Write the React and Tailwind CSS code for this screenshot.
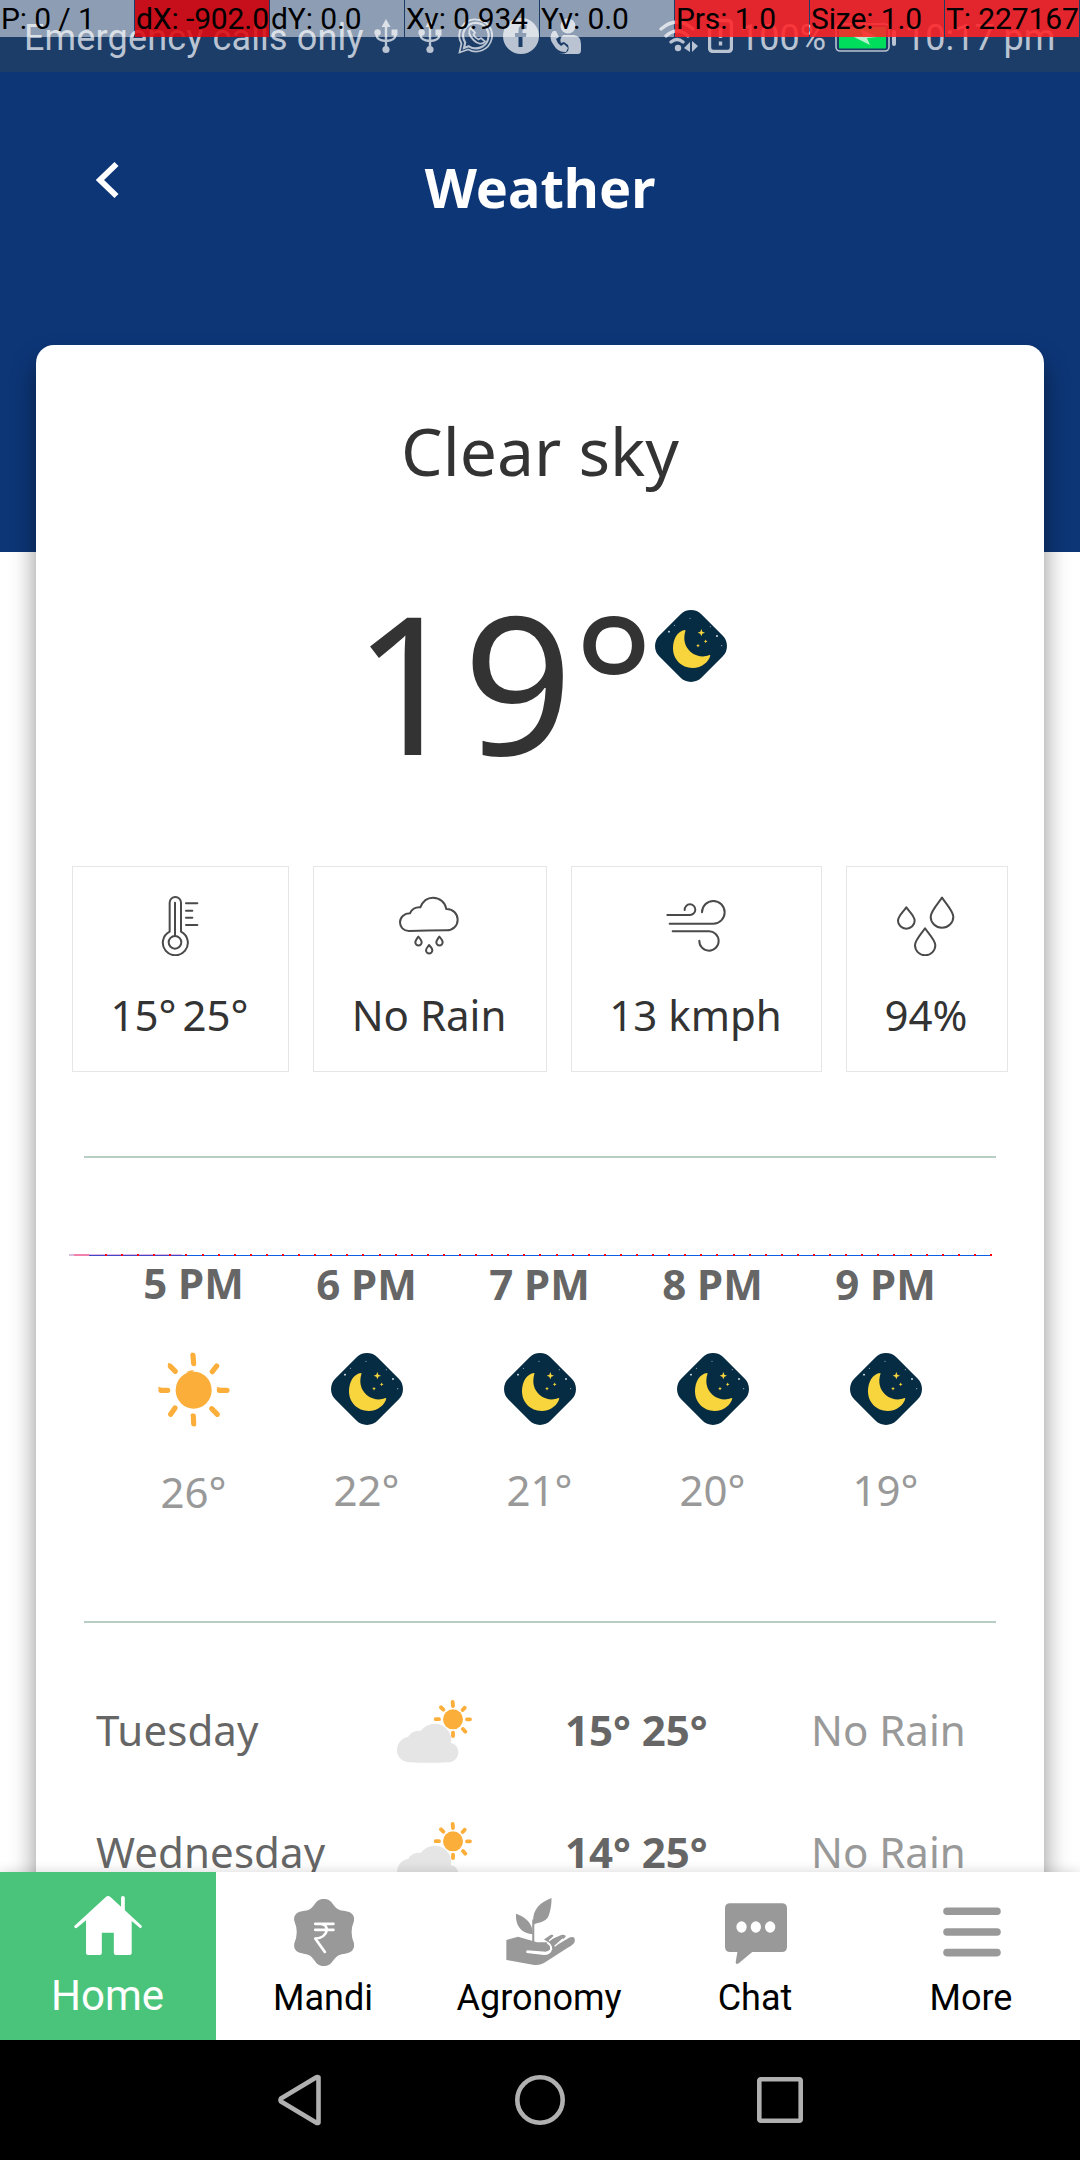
import React from "react";

const METRICS = [
  ["P: 0 / 1", "bg-white/50"],
  ["dX: -902.0", "bg-[#de090f]/88"],
  ["dY: 0.0", "bg-white/50"],
  ["Xv: 0.934", "bg-white/50"],
  ["Yv: 0.0", "bg-white/50"],
  ["Prs: 1.0", "bg-[#ff2325]/88"],
  ["Size: 1.0", "bg-[#ff2325]/88"],
  ["T: 227167", "bg-[#ff2325]/88"],
];

function PointerBar() {
  return (
    <div className="absolute left-0 top-0 z-20 grid h-[37px] w-full grid-cols-8">
      {METRICS.map(([label, bg]) => (
        <div key={label} className={`mr-px whitespace-nowrap pl-px pt-px text-[30px] leading-[36px] tracking-[-0.12px] text-black ${bg}`}>
          {label}
        </div>
      ))}
    </div>
  );
}

function Usb() {
  return (
    <svg className="h-9 w-6 shrink-0" viewBox="0 0 24 36" fill="none" stroke="currentColor" strokeWidth="2.4">
      <path d="M12 30V5M2.8 14v4q0 4 9 5M21.2 14v4q0 4-9 5" />
      <path d="M12 1l4.5 8h-9z" fill="currentColor" stroke="none" />
      <circle cx="12" cy="31.5" r="3.6" fill="currentColor" stroke="none" />
      <circle cx="3.6" cy="14.5" r="3.2" fill="currentColor" stroke="none" />
      <path d="M17.5 11.5h6v6h-6z" fill="currentColor" stroke="none" />
    </svg>
  );
}

function StatusBar() {
  return (
    <div className="flex h-[72px] w-full shrink-0 items-start bg-[#1b3d68] pl-6 pt-4 text-[36px] leading-[44px] whitespace-nowrap text-[#b9c3d1]">
      <span className="w-[350px] tracking-[0.15px]">Emergency calls only</span>
      <div className="mt-[2px] flex w-[284px] items-start">
        <Usb />
        <span className="w-5" />
        <Usb />
        <svg className="ml-4 h-9 w-9" viewBox="0 0 36 36" fill="none" stroke="currentColor">
          <path d="M18.3 1.5a16 16 0 1 1-8 30L1.5 34.5l2-9A16 16 0 0 1 18.3 1.5z" strokeWidth="1.8" />
          <path d="M18.3 4.8a12.8 12.8 0 1 1-7.5 23.5L6 30l1.2-5.5A12.8 12.8 0 0 1 18.3 4.8z" strokeWidth="2.2" />
          <path d="M12.5 10c-3 4-1 8 3 12s9 5 11.5 1.5l-4-3.5-2.5 1.5q-3.5-1.5-5-5l1.5-2z" strokeWidth="1.8" />
        </svg>
        <svg className="ml-[9px] h-9 w-9" viewBox="0 0 36 36">
          <path fillRule="evenodd" fill="currentColor" d="M18 0a18 18 0 1 0 0 36 18 18 0 1 0 0-36zM15.500 29V19h-3.500v-4h3.500v-3q0-5 5-5h3v4h-2q-2 0-2 2v2h4l-.6 4h-3.400v10z" />
        </svg>
        <svg className="ml-[11px] h-9 w-8" viewBox="0 0 32 36" fill="currentColor">
          <circle cx="18" cy="8" r="7.500" />
          <path d="M13 17h11q7 1 7 9v6q0 4-3 4H9q12 0 9-9l-4-3-3 1q-2-4 2-8z" />
          <path d="M3 13q-5 6 0 13 5 9 13 8l2-4-4-4-3 2q-4-3-5-7l3-2-3-6z" />
        </svg>
      </div>
      <svg className="mt-[3px] h-9 w-[42px]" viewBox="0 0 42 36" fill="none" stroke="currentColor" strokeWidth="3.300" strokeLinecap="round">
        <path d="M3 10Q19-4 35 10M8 17q11-10 22 0M13 23q6-5 12 0" />
        <circle cx="20" cy="29" r="3.200" fill="currentColor" stroke="none" />
        <path d="M32 23v10l-6-4zM34 22l6 5-6 6z" fill="currentColor" stroke="none" />
      </svg>
      <svg className="ml-[8px] mt-[2px] h-[35px] w-[25px]" viewBox="0 0 25 35" fill="none" stroke="currentColor" strokeWidth="3.400">
        <path d="M8.500 2.500h11q4 0 4 4v23q0 4-4 4h-14q-4 0-4-4V10z" />
        <path d="M12.500 10v10M12.500 23.500v4" />
      </svg>
      <span className="ml-[6px] w-[96px]">100%</span>
      <svg className="mt-[7px] h-[30px] w-[62px]" viewBox="0 0 62 30">
        <rect x="1" y="1" width="53" height="27" rx="4" fill="none" stroke="#b9c3d1" strokeWidth="1.600" />
        <rect x="4" y="4" width="47" height="21.500" rx="1" fill="#00dc5c" />
        <rect x="57" y="7" width="4" height="16" rx="2" fill="#b9c3d1" />
        <path d="M42 14l-16-8 2 7H17L35 22l-3-7z" fill="#b5f0cc" />
      </svg>
      <span className="ml-[8px]">10:17 pm</span>
    </div>
  );
}

function MoonIcon() {
  return (
    <svg className="h-[72px] w-[72px] shrink-0" viewBox="945 630 216 216">
      <rect x="963.500" y="648.500" width="179" height="179" rx="45" transform="rotate(45 1053 738)" fill="#062c43" />
      <path d="M1036 690C1012 692 999 718 999 745C999 778 1024 804 1058 804C1085 804 1107 786 1111 766Q1109 764 1106 766C1092 772 1068 770 1052 756C1034 740 1029 718 1036 694Q1037 691 1036 690Z" fill="#f8d53c" />
      <path d="M1084 687l3 8 8 3-8 3-3 8-3-8-8-3 8-3zM1097 718.500l1.700 3.800 3.800 1.700-3.800 1.700-1.700 3.800-1.700-3.800-3.800-1.700 3.800-1.700zM1074 731.500l1.700 3.800 3.800 1.700-3.800 1.700-1.700 3.800-1.700-3.800-3.800-1.700 3.800-1.700z" fill="#f8d53c" />
      <g fill="#dfe6ea">
        <circle cx="987" cy="695" r="2.800" />
        <circle cx="1131" cy="708" r="2.800" />
        <g opacity=".7">
          <circle cx="1003.500" cy="676" r="1.800" />
          <circle cx="1050" cy="655" r="1.700" />
          <circle cx="1111" cy="680" r="1.700" />
          <circle cx="1145" cy="737" r="1.800" />
        </g>
      </g>
    </svg>
  );
}

function SunIcon() {
  return (
    <svg className="h-[77px] w-[77px] shrink-0" viewBox="344 633 231 231" fill="#fcae3b">
      <ellipse cx="460" cy="750.500" rx="54" ry="55.500" />
      <path d="M437 699q8-9 24-8l-3 4z" />
      <g stroke="#fcae3b" strokeWidth="15.500" strokeLinecap="round">
        <path d="M458 646l2 25M459 828l1 24M362 751h20M537 751h23M390 679l15 15M529 678l-13 17M404 804l-13 19M514 806l17 17" />
      </g>
      <path d="M450 645l5-9 3 6zM382 676l2-8 8 5zM353 746l2-6 9 4zM529 746l2-6 9 4zM450 827l5-8 4 6z" />
    </svg>
  );
}

function PartlyCloudyIcon() {
  return (
    <svg className="ml-px mt-[2px] h-[63px] w-[75px] shrink-0" viewBox="1068 300 225 189">
      <circle cx="1236" cy="358" r="30" fill="#fcae3b" />
      <path d="M1235 306l1 12M1236 398v10M1184 357.500h10M1278 358h9M1200 322l7 7M1271 323l-6 7M1266 387l7 8" stroke="#fcae3b" strokeWidth="11.500" strokeLinecap="round" />
      <path d="M1106 487C1084 487 1068 471 1068 451C1068 431 1082 413 1101 411C1110 396 1125 390 1139 393C1151 378 1166 371 1182 371C1209 371 1230 393 1231 419L1229 429C1242 430 1252 442 1252 456C1252 474 1238 487 1221 487Q1165 490 1106 487Z" fill="#e5e5e5" />
    </svg>
  );
}

const line = { fill: "none", stroke: "#4a4a4a", strokeWidth: 6, strokeLinecap: "round", strokeLinejoin: "round" };

function TileIcon({ box, children }) {
  return (
    <svg className="h-[60px] w-[60px]" viewBox={box} {...line}>
      {children}
    </svg>
  );
}

const TILES = [
  {
    w: "w-[217px]",
    text: ["15°", "25°"],
    icon: (
      <TileIcon box="330 138 180 180">
        <path d="M389 245V158a17 17 0 0 1 34 0v87a37.500 37.500 0 1 1-34 0zM405 158v99" />
        <circle cx="405" cy="277" r="19" />
        <path d="M438 160h34M438 182h19M438 203h19M438 225h34" />
      </TileIcon>
    ),
  },
  {
    w: "w-[234px]",
    text: ["No Rain"],
    icon: (
      <TileIcon box="1080 138 180 180">
        <path d="M1110 243C1093 243 1083 231 1083 217C1083 202 1095 190 1113 190Q1121 171 1144 172C1151 154 1165 143 1182 143C1203 143 1219 158 1222 177C1243 176 1256 193 1256 209C1256 227 1242 241 1223 241Q1165 241 1110 243Z" />
        <path d="M1138 260q-9 12-9 17a9.500 9.500 0 0 0 19 0q0-6-10-17zM1201 260q-9 12-9 17a9.500 9.500 0 0 0 19 0q0-6-10-17zM1170 285q-9 12-9 16a9.500 9.500 0 0 0 19 0q0-6-10-16z" />
      </TileIcon>
    ),
  },
  {
    w: "w-[251px]",
    text: ["13 kmph"],
    icon: (
      <TileIcon box="379 138 180 180">
        <path d="M383 195h67a16 16 0 1 0-15-15M390 221h131a34 34 0 1 0-34-34M399 244h108a29 29 0 1 1-28 28" />
      </TileIcon>
    ),
  },
  {
    w: "w-[162px]",
    text: ["94%"],
    icon: (
      <TileIcon box="1071 138 180 180">
        <path d="M1209 143C1199 158 1175 184 1175 200a34 33 0 0 0 68 0C1243 184 1219 158 1209 143zM1102 172C1094 184 1077 198 1077 212a25 24 0 0 0 50 0C1127 198 1110 184 1102 172zM1158 235C1150 248 1128 270 1128 286a30.500 30 0 0 0 61 0C1189 270 1166 248 1158 235z" />
      </TileIcon>
    ),
  },
];

const HOURS = [
  ["5 PM", "26°", true],
  ["6 PM", "22°"],
  ["7 PM", "21°"],
  ["8 PM", "20°"],
  ["9 PM", "19°"],
];

const DAYS = [
  ["Tuesday", "15° 25°"],
  ["Wednesday", "14° 25°"],
];

function ChartLine() {
  return (
    <svg className="ml-[33px] mt-24 block h-[2px] w-[923px]" viewBox="0 0 923 2" shapeRendering="crispEdges">
      <rect width="5" height="2" fill="#d9bcdd" />
      <rect x="5" width="15" height="2" fill="#f281ab" />
      <rect x="20" width="93" height="1" fill="#dcb8e2" />
      <rect x="20" y="1" width="903" height="1" fill="#0f5fe6" />
      <rect x="20" y="1" width="93" height="1" fill="#3f46c8" />
      {Array.from({ length: 56 }, (_, i) => (
        <rect key={i} x={Math.round(36 + i * 16.09)} width="2" height="2" fill="#fb0410" />
      ))}
    </svg>
  );
}

function WeatherCard() {
  return (
    <section className="relative mx-9 -mt-[207px] h-[1700px] rounded-[18px] bg-white pt-[60px] font-['Noto_Sans','Open_Sans',sans-serif] text-[42px] leading-[58px] shadow-[0_16px_26px_rgba(0,0,0,0.44)]">
      <h2 className="text-center text-[66px] leading-[90px] text-[#333]">Clear sky</h2>
      <div className="mt-14 flex h-[260px] items-start justify-center text-[#333]">
        <span className="text-[192px] leading-[260px]">19°</span>
        <div className="mt-[59px]">
          <MoonIcon />
        </div>
      </div>
      <div className="mt-[55px] flex gap-6 px-9 text-[#333]">
        {TILES.map((t) => (
          <div key={t.w} className={`flex h-[206px] flex-col items-center border border-[#e6e6e6] pr-[2px] pt-[29px] ${t.w}`}>
            {t.icon}
            <div className="mt-[30px] flex gap-[6px] whitespace-nowrap">
              {t.text.map((s) => (
                <span key={s}>{s}</span>
              ))}
            </div>
          </div>
        ))}
      </div>
      <div className="mx-12 mt-[84px] h-[2px] bg-[#b7cfc2]" />
      <ChartLine />
      <div className="-mt-px ml-[71px] flex h-[366px]">
        {HOURS.map(([hour, temp, day]) => (
          <div key={hour} className={`flex w-[173px] flex-col items-center ${day ? "-mt-px" : ""}`}>
            <span className="font-bold text-[#666]">{hour}</span>
            <div className={day ? "mb-[35px] mt-[39px]" : "mb-9 mt-10"}>{day ? <SunIcon /> : <MoonIcon />}</div>
            <span className="text-[#999]">{temp}</span>
          </div>
        ))}
      </div>
      <div className="mx-12 h-[2px] bg-[#b7cfc2]" />
      <div className="mt-[46px] flex flex-col px-[60px]">
        {DAYS.map(([day, temp]) => (
          <div key={day} className="flex h-[122px] items-center whitespace-nowrap">
            <span className="w-[300px] tracking-[0.1px] text-[#666]">{day}</span>
            <PartlyCloudyIcon />
            <span className="ml-[93px] w-[246px] font-bold text-[#666]">{temp}</span>
            <span className="text-[#999]">No Rain</span>
          </div>
        ))}
      </div>
    </section>
  );
}

const NAV = [
  {
    label: "Mandi",
    icon: (
      <svg className="mt-[27px] h-[67px] w-[60px]" viewBox="853 118 175 200" preserveAspectRatio="none">
        <path d="M940 118C972 118 962 150 998 153C1024 156 1030 168 1028 184Q1014 218 1028 250C1030 268 1022 278 998 282C962 286 972 318 940 318C908 318 918 286 884 282C858 278 851 268 854 250Q868 218 854 184C851 168 858 156 884 153C918 150 908 118 940 118Z" fill="#999" />
        <path d="M915 192h53M915 210h53M930 192C958 192 955 234 915 236L943 276" fill="none" stroke="#fff" strokeWidth="8" strokeLinecap="round" strokeLinejoin="round" />
      </svg>
    ),
  },
  {
    label: "Agronomy",
    icon: (
      <svg className="mt-[26px] h-[67px] w-[69px]" viewBox="1470 116 200 200" preserveAspectRatio="none" fill="#999">
        <path d="M1602 116C1570 128 1546 150 1549 188V196C1560 188 1586 190 1594 168C1600 150 1602 134 1602 116Z" />
        <path d="M1499 163C1524 172 1548 190 1548 224C1520 222 1497 206 1499 163Z" />
        <path d="M1546 180h6v67h-6z" />
        <path d="M1471 241L1505 232L1560 248L1590 248Q1602 258 1598 270Q1592 278 1578 276L1530 272V280L1580 286Q1600 286 1604 268Q1604 254 1590 246L1580 240L1600 226Q1608 224 1607 230L1600 240L1632 226Q1644 224 1643 232L1618 256L1654 234Q1672 228 1669 246Q1668 254 1650 264L1580 310Q1566 318 1548 315L1471 301Z" />
        <path d="M1530 277l50 5q20-1 20-16 0-10-10-16" fill="none" stroke="#fff" strokeWidth="4" strokeLinecap="round" />
        <path d="M1596 243l18-16M1612 259l22-20" fill="none" stroke="#fff" strokeWidth="4" strokeLinecap="round" />
      </svg>
    ),
  },
  {
    label: "Chat",
    icon: (
      <svg className="mt-[31px] h-[61px] w-[62px]" viewBox="535 129 180 183" preserveAspectRatio="none">
        <path d="M550 130H700Q715 130 715 145V261Q715 276 700 276H614L575 310Q566 315 566 306L571 276H550Q535 276 535 261V145Q535 130 550 130Z" fill="#999" />
        <ellipse cx="583" cy="201" rx="15" ry="17" fill="#fff" />
        <ellipse cx="624.500" cy="201" rx="15" ry="17" fill="#fff" />
        <ellipse cx="666" cy="201" rx="15" ry="17" fill="#fff" />
      </svg>
    ),
  },
  {
    label: "More",
    icon: (
      <svg className="mt-[35px] h-[50px] w-[58px]" viewBox="0 0 58 50" stroke="#999" strokeWidth="7.600" strokeLinecap="round">
        <path d="M4 4.200h50M4 25h50M4 45.600h50" />
      </svg>
    ),
  },
];

function BottomNav() {
  return (
    <nav className="relative z-10 grid h-[168px] shrink-0 grid-cols-5 bg-white shadow-[0_-2px_10px_rgba(0,0,0,0.12)]">
      <div className="flex h-[168px] flex-col items-center bg-[#4bc47b] text-white">
        <svg className="mt-6 h-[59px] w-[68px] shrink-0" viewBox="215 107 198 177" preserveAspectRatio="none" fill="#fff">
          <path d="M314 107Q318 107 322 111L352 139V112Q352 107 357 107 363 107 363 112V150L412 196Q414 202 408 204L383 182V278Q383 284 377 284H337Q331 284 331 278V217H296V278Q296 284 290 284H256Q250 284 250 278V180L222 204Q214 204 216 197L307 111Q311 107 314 107Z" />
        </svg>
        <span className="mt-[16px] pr-px text-[42px] leading-[50px]">Home</span>
      </div>
      {NAV.map(({ label, icon }) => (
        <div key={label} className="flex h-[168px] flex-col items-center justify-between pb-[20px] text-black">
          {icon}
          <span className="pr-[2px] text-[36px] leading-[44px]">{label}</span>
        </div>
      ))}
    </nav>
  );
}

function SystemNav() {
  return (
    <div className="flex h-[120px] shrink-0 items-center bg-black pl-[278px]">
      <svg className="h-[52px] w-[43px]" viewBox="0 0 43 52" fill="none" stroke="#b0b0b0" strokeWidth="4.600" strokeLinejoin="round">
        <path d="M40.500 3.500v45q-1 1-2.500 0L3 27.500q-1-1.500 0-3L38 3.500q1.500-1 2.500 0z" />
      </svg>
      <svg className="ml-[194px] h-[50px] w-[50px]" viewBox="0 0 50 50" fill="none" stroke="#b0b0b0" strokeWidth="4.600">
        <circle cx="25" cy="25" r="22.700" />
      </svg>
      <svg className="ml-[192px] h-[46px] w-[46px]" viewBox="0 0 46 46" fill="none" stroke="#b0b0b0" strokeWidth="4.600" strokeLinejoin="round">
        <rect x="2.300" y="2.300" width="41.400" height="41.400" rx="1.500" />
      </svg>
    </div>
  );
}

export default function App() {
  return (
    <div className="relative flex h-[2160px] w-[1080px] flex-col overflow-hidden bg-white font-['Roboto',sans-serif]">
      <PointerBar />
      <StatusBar />
      <main className="h-[1800px] shrink-0 overflow-hidden">
        <header className="flex h-[480px] items-start bg-[#0d3677] text-white">
          <div className="w-1/4 pl-24 pt-[89px]">
            <svg className="h-[38px] w-[23px]" viewBox="0 0 23 38" fill="none" stroke="#fff" strokeWidth="5.800">
              <path d="M20.500 3L4 19l16.500 16" />
            </svg>
          </div>
          <h1 className="flex-1 pt-[78px] text-center font-['Noto_Sans','Open_Sans',sans-serif] text-[54px] font-bold leading-[74px]">
            Weather
          </h1>
          <div className="w-1/4" />
        </header>
        <WeatherCard />
      </main>
      <BottomNav />
      <SystemNav />
    </div>
  );
}
